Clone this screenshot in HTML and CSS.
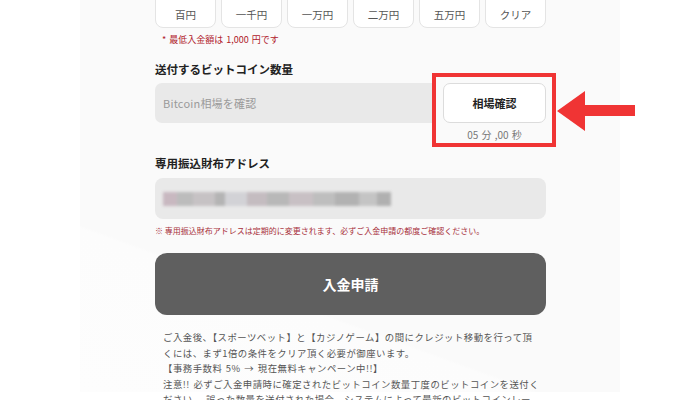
FILE: index.html
```html
<!DOCTYPE html>
<html lang="ja">
<head>
<meta charset="utf-8">
<title>入金申請</title>
<link rel="stylesheet" href="styles.css">
</head>
<body>
<div class="panel">
  <div class="amounts">
    <button class="amount">百円</button>
    <button class="amount">一千円</button>
    <button class="amount">一万円</button>
    <button class="amount">二万円</button>
    <button class="amount">五万円</button>
    <button class="amount">クリア</button>
  </div>
  <p class="min-note">* 最低入金額は 1,000 円です</p>

  <h3 class="label label-first">送付するビットコイン数量</h3>
  <div class="rate-row">
    <div class="field field-rate">Bitcoin相場を確認</div>
    <div class="rate-side">
      <button class="rate-btn">相場確認</button>
      <div class="timer">05 分 ,00 秒</div>
      <div class="highlight"></div>
      <svg class="arrow" width="80" height="42" viewBox="0 0 80 42">
        <polygon points="0,20 28,0 28,14 78,14 78,25 28,25 28,40" fill="#f03434"/>
      </svg>
    </div>
  </div>

  <h3 class="label label-second">専用振込財布アドレス</h3>
  <div class="field field-address"><div class="blurred"></div></div>
  <p class="addr-note">※ 専用振込財布アドレスは定期的に変更されます、必ずご入金申請の都度ご確認ください。</p>

  <button class="submit">入金申請</button>

  <div class="notes">
    <p>ご入金後、【スポーツベット】と【カジノゲーム】の間にクレジット移動を行って頂<br>くには、まず1倍の条件をクリア頂く必要が御座います。</p>
    <p>【事務手数料 5% → 現在無料キャンペーン中!!】</p>
    <p>注意!! 必ずご入金申請時に確定されたビットコイン数量丁度のビットコインを送付く<br>ださい。 誤った数量を送付された場合、システムによって最新のビットコインレー<br>トで換算されます。</p>
  </div>
</div>
</body>
</html>
```

FILE: styles.css
```css
* { box-sizing: border-box; }

html, body {
  margin: 0;
  padding: 0;
  background: #ffffff;
  height: 400px;
  overflow: hidden;
}

body {
  font-family: "Noto Sans CJK JP", "Noto Sans", sans-serif;
  color: #333;
}

.panel {
  width: 540px;
  height: 400px;
  margin: 0 auto;
  padding: 0 74px 0 75px;
  background: linear-gradient(200deg, #fafafa 0%, #fafafa 72%, #fcfcfc 72.5%, #fdfdfd 100%);
}

.amounts {
  display: grid;
  grid-template-columns: repeat(6, 1fr);
  gap: 5px;
  margin-top: -8px;
}

.amount {
  height: 36px;
  padding: 8px 0 0 0;
  border: 1px solid #e4e4e4;
  border-radius: 8px;
  background: #ffffff;
  font-family: inherit;
  font-size: 10.5px;
  color: #555;
}

.min-note {
  margin: 6px 0 0 7px;
  font-size: 9px;
  line-height: 12px;
  color: #b0202a;
  word-spacing: 1px;
}

.label {
  margin: 0;
  font-size: 11.5px;
  line-height: 16px;
  font-weight: 700;
  color: #222;
}

.label-first { margin-top: 15px; }
.label-second { margin-top: 14px; }

.rate-row {
  display: flex;
  gap: 10px;
  margin-top: 6px;
}

.field {
  background: #e9e9e9;
  border-radius: 7px;
}

.field-rate {
  width: 278px;
  height: 40px;
  padding-left: 8px;
  border-radius: 7px 0 0 7px;
  font-size: 11px;
  line-height: 40px;
  color: #9a9a9a;
  letter-spacing: 0.2px;
}

.rate-side {
  position: relative;
  width: 103px;
}

.rate-btn {
  display: block;
  width: 103px;
  height: 40px;
  border: 1px solid #dcdcdc;
  border-radius: 7px;
  background: #fff;
  font-family: inherit;
  font-size: 11px;
  font-weight: 700;
  color: #222;
}

.timer {
  margin-top: 5px;
  text-align: center;
  font-size: 10px;
  line-height: 13px;
  color: #777;
  word-spacing: 1px;
}

.highlight {
  position: absolute;
  left: -11px;
  top: -10px;
  width: 124px;
  height: 74px;
  border: 4px solid #f03434;
}

.arrow {
  position: absolute;
  left: 114px;
  top: 8px;
}

.field-address {
  height: 41px;
  margin-top: 7px;
  padding: 14px 0 0 8px;
  border-radius: 8px;
}

.blurred {
  width: 228px;
  height: 14px;
  filter: blur(1.6px);
  background: linear-gradient(90deg,
    #c8b8c0 0px, #c8b8c0 14px,
    #bcbcbc 14px, #bcbcbc 30px,
    #c6c2c4 30px, #c6c2c4 52px,
    #b4b4b4 52px, #b4b4b4 62px,
    #d2d2d6 62px, #d2d2d6 84px,
    #c4bcc0 84px, #c4bcc0 104px,
    #b8b8b8 104px, #b8b8b8 126px,
    #c8c0c4 126px, #c8c0c4 150px,
    #bebebe 150px, #bebebe 172px,
    #b2b2b2 172px, #b2b2b2 196px,
    #c4c4c4 196px, #c4c4c4 214px,
    #b0b0b0 214px, #b0b0b0 228px);
}

.addr-note {
  margin: 6px 0 0 0;
  font-size: 8px;
  line-height: 11px;
  color: #a8303a;
  white-space: nowrap;
}

.submit {
  display: block;
  width: 100%;
  height: 62px;
  margin-top: 17px;
  border: none;
  border-radius: 12px;
  background: #5f5f5f;
  color: #fff;
  font-family: inherit;
  font-size: 14px;
  font-weight: 700;
}

.notes {
  margin-top: 15px;
  padding-left: 8px;
  width: 410px;
  font-size: 9.4px;
  line-height: 15.6px;
  color: #555;
  letter-spacing: 0.5px;
  word-spacing: 1px;
  white-space: nowrap;
}

.notes p { margin: 0; }
```
